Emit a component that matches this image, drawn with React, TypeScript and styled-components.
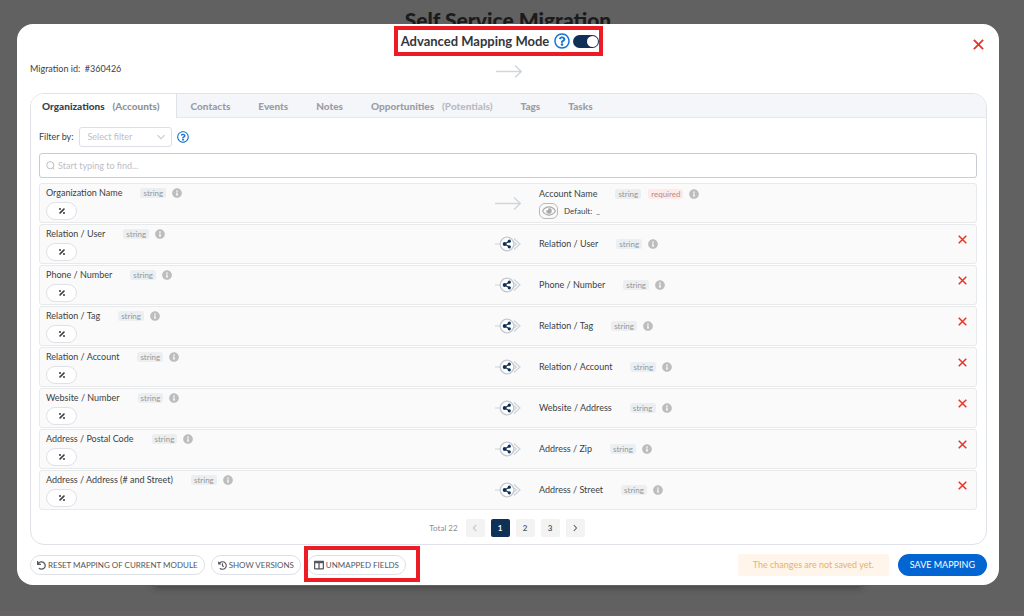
import React, { useState } from "react";
import styled, { createGlobalStyle } from "styled-components";
import {
  FaColumns,
  FaHistory,
  FaInfoCircle,
  FaPercentage,
  FaRegEye,
  FaRegQuestionCircle,
  FaUndo,
} from "react-icons/fa";

const GlobalStyle = createGlobalStyle`
  * { box-sizing: border-box; }
  body { margin: 0; background: #606160; }
  body, button, input, select {
    font-family: Lato, "Open Sans", sans-serif;
    font-size: 9px;
    line-height: 12px;
    color: #3c3f44;
  }
  button { padding: 0; border: 0; background: none; cursor: pointer; }
  svg { display: block; flex: none; }
`;

const Page = styled.div`
  position: relative;
  min-height: 100vh;
  padding: 24px 25px 31px 17px;
  overflow: hidden;
`;

const Backdrop = styled.div`
  position: absolute;
  inset: 0;
  display: flex;
  flex-direction: column;
  align-items: center;
  padding: 8px 25px 0 17px;
  border-bottom: 5px solid #666465;
`;

const PageTitle = styled.h1`
  margin: 0;
  flex: 1;
  font-size: 21px;
  line-height: 24px;
  font-weight: 900;
  color: #1b1b1b;
`;

const BackdropCard = styled.div`
  width: 72%;
  height: 20px;
  margin-bottom: 25px;
  box-shadow: 0 2px 6px #454645;
`;

const Dialog = styled.main`
  position: relative;
  padding: 2px 12px 9px 13px;
  border-radius: 16px;
  background: #fff;
`;

const CloseButton = styled.button`
  position: absolute;
  top: 15px;
  right: 15px;
`;

const DialogHeader = styled.header`
  display: flex;
  justify-content: center;
  padding-right: 20px;
`;

const ModeSwitch = styled.div`
  display: flex;
  align-items: center;
  gap: 3px;
  height: 30px;
  padding: 0 0 0 3px;
  border: 4px solid #ec1c24;
`;

const ModeLabel = styled.label`
  margin-right: 2px;
  font-size: 13px;
  line-height: 16px;
  font-weight: 700;
  color: #33363b;
`;

const HelpButton = styled.button`
  color: #1673d6;
`;

const Toggle = styled.input`
  appearance: none;
  width: 26px;
  height: 13px;
  margin: 0;
  border-radius: 8px;
  background: #8d95a0;
  display: flex;
  padding: 1px;

  &::before {
    content: "";
    width: 11px;
    height: 11px;
    border-radius: 50%;
    background: #fff;
  }

  &:checked {
    justify-content: flex-end;
    background: #0f3157;
  }
`;

const MigrationBar = styled.div`
  display: grid;
  grid-template-columns: 1fr 28px 1fr;
  align-items: center;
  height: 37px;
  padding-bottom: 7px;
`;

const MigrationId = styled.span`
  padding-bottom: 4px;
  white-space: pre;
`;

const Panel = styled.section`
  border: 1px solid #dfe2ea;
  border-radius: 14px;
  overflow: hidden;
`;

const Tabs = styled.div`
  display: flex;
  height: 24px;
  border-bottom: 1px solid #e6e8ee;
  background: #f5f6fa;
`;

const Tab = styled.button<{ $active: boolean }>`
  display: flex;
  align-items: center;
  gap: 8px;
  height: 24px;
  padding: 0 14px;
  font-size: 10px;
  font-weight: 900;
  white-space: nowrap;
  color: ${(p) => (p.$active ? "#3a444e" : "#9a9da4")};
  ${(p) => p.$active && "background: #fff; border-right: 1px solid #dfe2ea; padding: 0 16px 0 11px;"}
`;

const TabTarget = styled.span<{ $active: boolean }>`
  color: ${(p) => (p.$active ? "#8e9499" : "#b8bbc0")};
`;

const PanelBody = styled.div`
  padding: 9px 9px 7px 8px;
`;

const FilterBar = styled.div`
  display: flex;
  align-items: center;
  gap: 5px;
  height: 20px;
`;

const SelectBox = styled.div`
  position: relative;
  width: 93px;
  color: #c0c4cc;

  svg {
    position: absolute;
    right: 7px;
    top: 6px;
    pointer-events: none;
  }
`;

const FilterSelect = styled.select`
  appearance: none;
  display: block;
  width: 100%;
  height: 20px;
  padding: 0 20px 0 8px;
  border: 1px solid #dcdfe6;
  border-radius: 3px;
  background: #fff;
  color: #bcc0c8;
`;

const SearchBox = styled.label`
  display: flex;
  align-items: center;
  gap: 3px;
  height: 25px;
  margin: 6px 0 5px;
  padding: 0 6px;
  border: 1px solid #c9ccd3;
  border-radius: 3px;
  color: #b9bdc5;
`;

const SearchInput = styled.input`
  flex: 1;
  min-width: 0;
  padding: 0;
  border: 0;
  outline: 0;
  &::placeholder { color: #bcc0c8; }
`;

const Rows = styled.ul`
  display: grid;
  gap: 1px;
  margin: 0;
  padding: 0;
  list-style: none;
`;

const Row = styled.li`
  display: grid;
  grid-template-columns: 1fr 28px 1fr;
  align-items: center;
  height: 40px;
  border: 1px solid #e8e9eb;
  border-radius: 3px;
  background: #fafafa;
`;

const Source = styled.div`
  display: grid;
  gap: 3px;
  padding: 0 6px;
`;

const Target = styled.div`
  display: flex;
  align-items: center;
  justify-content: space-between;
  padding: 0 9px 0 17px;
`;

const TargetInfo = styled.div`
  display: grid;
  gap: 3px;
`;

const Field = styled.div`
  display: flex;
  align-items: center;
  height: 12px;
  white-space: nowrap;
`;

const Tags = styled.span`
  display: flex;
  gap: 7px;
  margin: 0 6px 0 18px;
`;

const Tag = styled.span<{ $required?: boolean }>`
  padding: 0 3px;
  border-radius: 2px;
  font-size: 8px;
  line-height: 10px;
  background: ${(p) => (p.$required ? "#fdebe9" : "#eceff1")};
  color: ${(p) => (p.$required ? "#b58d8a" : "#93979b")};
`;

const InfoButton = styled.button`
  color: #bdbdbd;
`;

const FormatButton = styled.button`
  display: flex;
  align-items: center;
  justify-content: center;
  width: 31px;
  height: 18px;
  border: 1px solid #dfe1e8;
  border-radius: 9px;
  background: #fff;
`;

const DefaultValue = styled.div`
  display: flex;
  align-items: center;
  gap: 6px;
  font-size: 8px;
  white-space: pre;
`;

const EyeButton = styled.button`
  display: flex;
  align-items: center;
  justify-content: center;
  width: 19px;
  height: 16px;
  border: 1px solid #b9b9b9;
  border-radius: 6px;
  color: #a9a9a9;
`;

const RemoveButton = styled.button`
  padding-bottom: 9px;
`;

const Pagination = styled.nav`
  display: flex;
  align-items: center;
  justify-content: center;
  gap: 6px;
  margin-top: 9px;
  padding-right: 2px;
`;

const Total = styled.span`
  margin-right: 2px;
  font-size: 8px;
  color: #8b8e93;
`;

const PageButton = styled.button<{ $current?: boolean }>`
  display: flex;
  align-items: center;
  justify-content: center;
  width: 19px;
  height: 18px;
  border-radius: 2px;
  font-size: 8px;
  font-weight: 700;
  background: ${(p) => (p.$current ? "#0f3157" : "#f3f3f4")};
  color: ${(p) => (p.$current ? "#fff" : "#5c6066")};
  &:disabled { color: #b9bdc5; }
`;

const Footer = styled.footer`
  display: flex;
  align-items: center;
  justify-content: space-between;
  margin-top: 9px;
`;

const Actions = styled.div`
  display: flex;
  align-items: center;
  gap: 6px;
`;

const Marked = styled.div`
  position: relative;
  &::after {
    content: "";
    position: absolute;
    inset: -9px -14px -7px -3px;
    border: 4px solid #ec1c24;
    pointer-events: none;
  }
`;

const OutlineButton = styled.button`
  display: flex;
  align-items: center;
  gap: 2px;
  height: 20px;
  padding: 0 6px;
  border: 1px solid #dfe1e8;
  border-radius: 10px;
  white-space: nowrap;
  font-size: 8px;
  color: #54575c;
`;

const Notice = styled.p`
  margin: 0 3px 0 0;
  padding: 0 15px;
  border-radius: 2px;
  background: #fff5ea;
  color: #e6b366;
  line-height: 22px;
`;

const SaveButton = styled.button`
  height: 22px;
  padding: 0 12px;
  border-radius: 11px;
  background: #0265d2;
  color: #fff;
  white-space: nowrap;
`;

const Cross = ({ size }: { size: number }) => (
  <svg width={size} height={size} viewBox="0 0 10 10" stroke="#e8352a" strokeWidth="1.7" fill="none">
    <path d="M.8.8l8.4 8.4M9.2.8L.8 9.2" />
  </svg>
);

const Arrow = () => (
  <svg width="28" height="16" viewBox="0 0 28 16" fill="none" stroke="#d0d6da" strokeWidth="1.4">
    <path d="M1 8.500h25M20 2.500l6.300 6-6.300 6" />
  </svg>
);

const RelationArrow = () => (
  <svg width="28" height="16" viewBox="0 0 28 16" fill="none">
    <path d="M1 8h5M20 2.500l6 5.500-6 5.500M18 4.500l4.500 3.500-4.500 3.500" stroke="#cdd3d9" strokeWidth="1.2" />
    <circle cx="13" cy="8" r="6.800" fill="#fff" stroke="#c3cad1" strokeWidth="1.3" />
    <path d="M15.500 5.200L10.500 8l5 2.800" stroke="#0f3157" strokeWidth="1.1" />
    <g fill="#0f3157">
      <circle cx="10.600" cy="8" r="1.900" />
      <circle cx="15.300" cy="5.200" r="1.600" />
      <circle cx="15.300" cy="10.800" r="1.600" />
    </g>
  </svg>
);

const Chevron = ({ d }: { d: string }) => (
  <svg width="8" height="8" viewBox="0 0 8 8" fill="none" stroke="currentColor" strokeWidth="1.1">
    <path d={d} />
  </svg>
);

const SearchIcon = () => (
  <svg width="9" height="9" viewBox="0 0 9 9" fill="none" stroke="currentColor" strokeWidth="1">
    <circle cx="4.300" cy="4.200" r="3.600" />
    <path d="M6.400 6.600l2 1.900" />
  </svg>
);

const tabs = [
  { name: "Organizations", target: "(Accounts)" },
  { name: "Contacts" },
  { name: "Events" },
  { name: "Notes" },
  { name: "Opportunities", target: "(Potentials)" },
  { name: "Tags" },
  { name: "Tasks" },
];

const mappings = [
  { source: "Organization Name", target: "Account Name", required: true },
  { source: "Relation / User", target: "Relation / User" },
  { source: "Phone / Number", target: "Phone / Number" },
  { source: "Relation / Tag", target: "Relation / Tag" },
  { source: "Relation / Account", target: "Relation / Account" },
  { source: "Website / Number", target: "Website / Address" },
  { source: "Address / Postal Code", target: "Address / Zip" },
  { source: "Address / Address (# and Street)", target: "Address / Street" },
];

const FieldLabel = ({ name, required }: { name: string; required?: boolean }) => (
  <Field>
    <span>{name}</span>
    <Tags>
      <Tag>string</Tag>
      {required && <Tag $required>required</Tag>}
    </Tags>
    <InfoButton aria-label={`About ${name}`}>
      <FaInfoCircle size={10} />
    </InfoButton>
  </Field>
);

export default function App() {
  const [active, setActive] = useState(0);
  const [page, setPage] = useState(1);

  return (
    <>
      <GlobalStyle />
      <Page>
        <Backdrop>
          <PageTitle>Self Service Migration</PageTitle>
          <BackdropCard />
        </Backdrop>
        <Dialog>
          <CloseButton aria-label="Close">
            <Cross size={11} />
          </CloseButton>
          <DialogHeader>
            <ModeSwitch>
              <ModeLabel htmlFor="mode">Advanced Mapping Mode</ModeLabel>
              <HelpButton aria-label="About mapping mode">
                <FaRegQuestionCircle size={16} />
              </HelpButton>
              <Toggle id="mode" type="checkbox" role="switch" defaultChecked />
            </ModeSwitch>
          </DialogHeader>
          <MigrationBar>
            <MigrationId>{"Migration id:  #360426"}</MigrationId>
            <Arrow />
          </MigrationBar>

          <Panel>
            <Tabs role="tablist">
              {tabs.map((t, i) => (
                <Tab key={t.name} role="tab" aria-selected={i === active} $active={i === active} onClick={() => setActive(i)}>
                  {t.name}
                  {t.target && <TabTarget $active={i === active}>{t.target}</TabTarget>}
                </Tab>
              ))}
            </Tabs>
            <PanelBody>
              <FilterBar>
                <label htmlFor="filter">Filter by:</label>
                <SelectBox>
                  <FilterSelect id="filter" defaultValue="">
                    <option value="">Select filter</option>
                  </FilterSelect>
                  <Chevron d="M.5 2.200L4 5.800l3.500-3.600" />
                </SelectBox>
                <HelpButton aria-label="About filters">
                  <FaRegQuestionCircle size={12} />
                </HelpButton>
              </FilterBar>
              <SearchBox>
                <SearchIcon />
                <SearchInput aria-label="Find a field" placeholder="Start typing to find..." />
              </SearchBox>
              <Rows>
                {mappings.map((m) => (
                  <Row key={m.source}>
                    <Source>
                      <FieldLabel name={m.source} />
                      <FormatButton aria-label={`Format ${m.source}`}>
                        <FaPercentage size={8} />
                      </FormatButton>
                    </Source>
                    {m.required ? <Arrow /> : <RelationArrow />}
                    <Target>
                      <TargetInfo>
                        <FieldLabel name={m.target} required={m.required} />
                        {m.required && (
                          <DefaultValue>
                            <EyeButton aria-label="Show default value">
                              <FaRegEye size={14} />
                            </EyeButton>
                            {"Default:  _"}
                          </DefaultValue>
                        )}
                      </TargetInfo>
                      {!m.required && (
                        <RemoveButton aria-label={`Remove ${m.target}`}>
                          <Cross size={9} />
                        </RemoveButton>
                      )}
                    </Target>
                  </Row>
                ))}
              </Rows>
              <Pagination aria-label="Pages">
                <Total>Total 22</Total>
                <PageButton aria-label="Previous" disabled={page === 1} onClick={() => setPage(page - 1)}>
                  <Chevron d="M5.200 1L2.500 4l2.700 3" />
                </PageButton>
                {[1, 2, 3].map((n) => (
                  <PageButton key={n} $current={n === page} onClick={() => setPage(n)}>
                    {n}
                  </PageButton>
                ))}
                <PageButton aria-label="Next" disabled={page === 3} onClick={() => setPage(page + 1)}>
                  <Chevron d="M2.800 1l2.700 3-2.700 3" />
                </PageButton>
              </Pagination>
            </PanelBody>
          </Panel>

          <Footer>
            <Actions>
              <OutlineButton>
                <FaUndo size={9} />
                RESET MAPPING OF CURRENT MODULE
              </OutlineButton>
              <OutlineButton>
                <FaHistory size={9} />
                SHOW VERSIONS
              </OutlineButton>
              <Marked>
                <OutlineButton>
                  <FaColumns size={10} />
                  UNMAPPED FIELDS
                </OutlineButton>
              </Marked>
            </Actions>
            <Actions>
              <Notice>The changes are not saved yet.</Notice>
              <SaveButton>SAVE MAPPING</SaveButton>
            </Actions>
          </Footer>
        </Dialog>
      </Page>
    </>
  );
}
